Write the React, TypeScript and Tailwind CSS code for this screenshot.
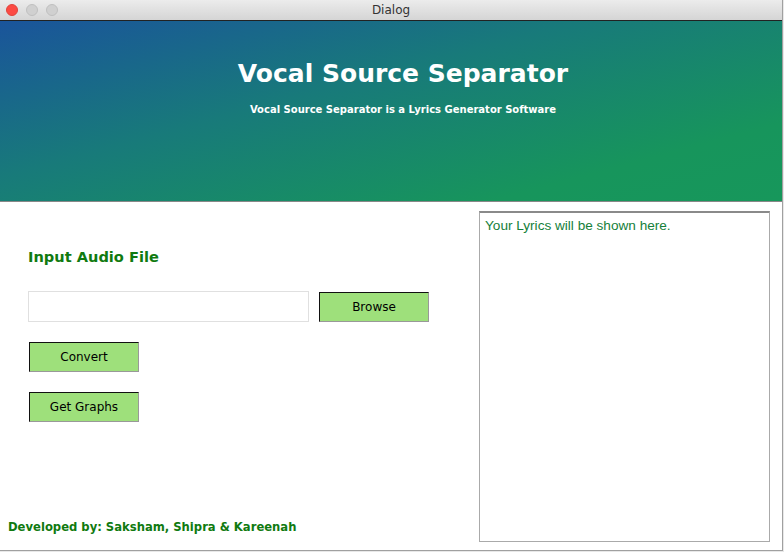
export default function App() {
  const btn =
    "h-[30px] w-[110px] bg-[#9ee07b] border border-t-[#111] border-l-[#111] border-r-[#999] border-b-[#999] text-[12px] text-black flex items-center justify-center [font-family:'DejaVu_Sans',sans-serif]";
  return (
    <div className="w-[784px] h-[552px] bg-[#e8e8e8] overflow-hidden">
      <div className="w-[783px] h-[551px] bg-white border-r border-b border-[#a0a0a0] flex flex-col">
        <div className="h-[21px] shrink-0 bg-gradient-to-b from-[#ececec] to-[#d5d5d5] border-b border-[#222] relative flex items-center justify-center">
          <div className="absolute left-[6px] top-[4px] flex gap-[8px]">
            <span className="w-[12px] h-[12px] rounded-full bg-[#fc4a43] border border-[#e0443c]" />
            <span className="w-[12px] h-[12px] rounded-full bg-[#d0d0d0] border border-[#c0c0c0]" />
            <span className="w-[12px] h-[12px] rounded-full bg-[#d0d0d0] border border-[#c0c0c0]" />
          </div>
          <span className="text-[12px] text-[#333] [font-family:'DejaVu_Sans',sans-serif]">Dialog</span>
        </div>
        <div className="h-[181px] shrink-0 bg-[linear-gradient(165deg,#1a549b_0%,#187a7a_40%,#17955c_80%,#17975b_100%)] border-b border-[#888] flex flex-col items-center pl-[24px] pt-[37px]">
          <div className="text-white font-bold text-[25px] leading-[32px] [font-family:'DejaVu_Sans',sans-serif]">
            Vocal Source Separator
          </div>
          <div className="text-white font-bold text-[10px] leading-[14px] mt-[13px] [font-family:'DejaVu_Sans',sans-serif]">
            Vocal Source Separator is a Lyrics Generator Software
          </div>
        </div>
        <div className="flex-1 flex">
          <div className="w-[479px] shrink-0 flex flex-col pl-[28px] pt-[45px] relative">
            <div className="text-[#107a10] font-bold text-[14.6px] leading-[20px] [font-family:'DejaVu_Sans',sans-serif]">
              Input Audio File
            </div>
            <div className="flex items-center gap-[10px] mt-[24px]">
              <div className="w-[281px] h-[31px] border border-[#e0e0e0] bg-white" />
              <div className={btn}>Browse</div>
            </div>
            <div className={btn + " mt-[20px] ml-[1px]"}>Convert</div>
            <div className={btn + " mt-[20px] ml-[1px]"}>Get Graphs</div>
            <div className="mt-auto mb-[14px] -ml-[20px] text-[#107a10] font-bold text-[11.6px] [font-family:'DejaVu_Sans',sans-serif]">
              Developed by: Saksham, Shipra &amp; Kareenah
            </div>
          </div>
          <div className="mt-[9px] mb-[8px] w-[291px] border border-[#aaa] border-t-[#8a8a8a] border-t-2 bg-white px-[5px] pt-[3px]">
            <div className="text-[#15803a] text-[13.6px] [font-family:'Liberation_Sans',sans-serif]">
              Your Lyrics will be shown here.
            </div>
          </div>
        </div>
      </div>
    </div>
  );
}
